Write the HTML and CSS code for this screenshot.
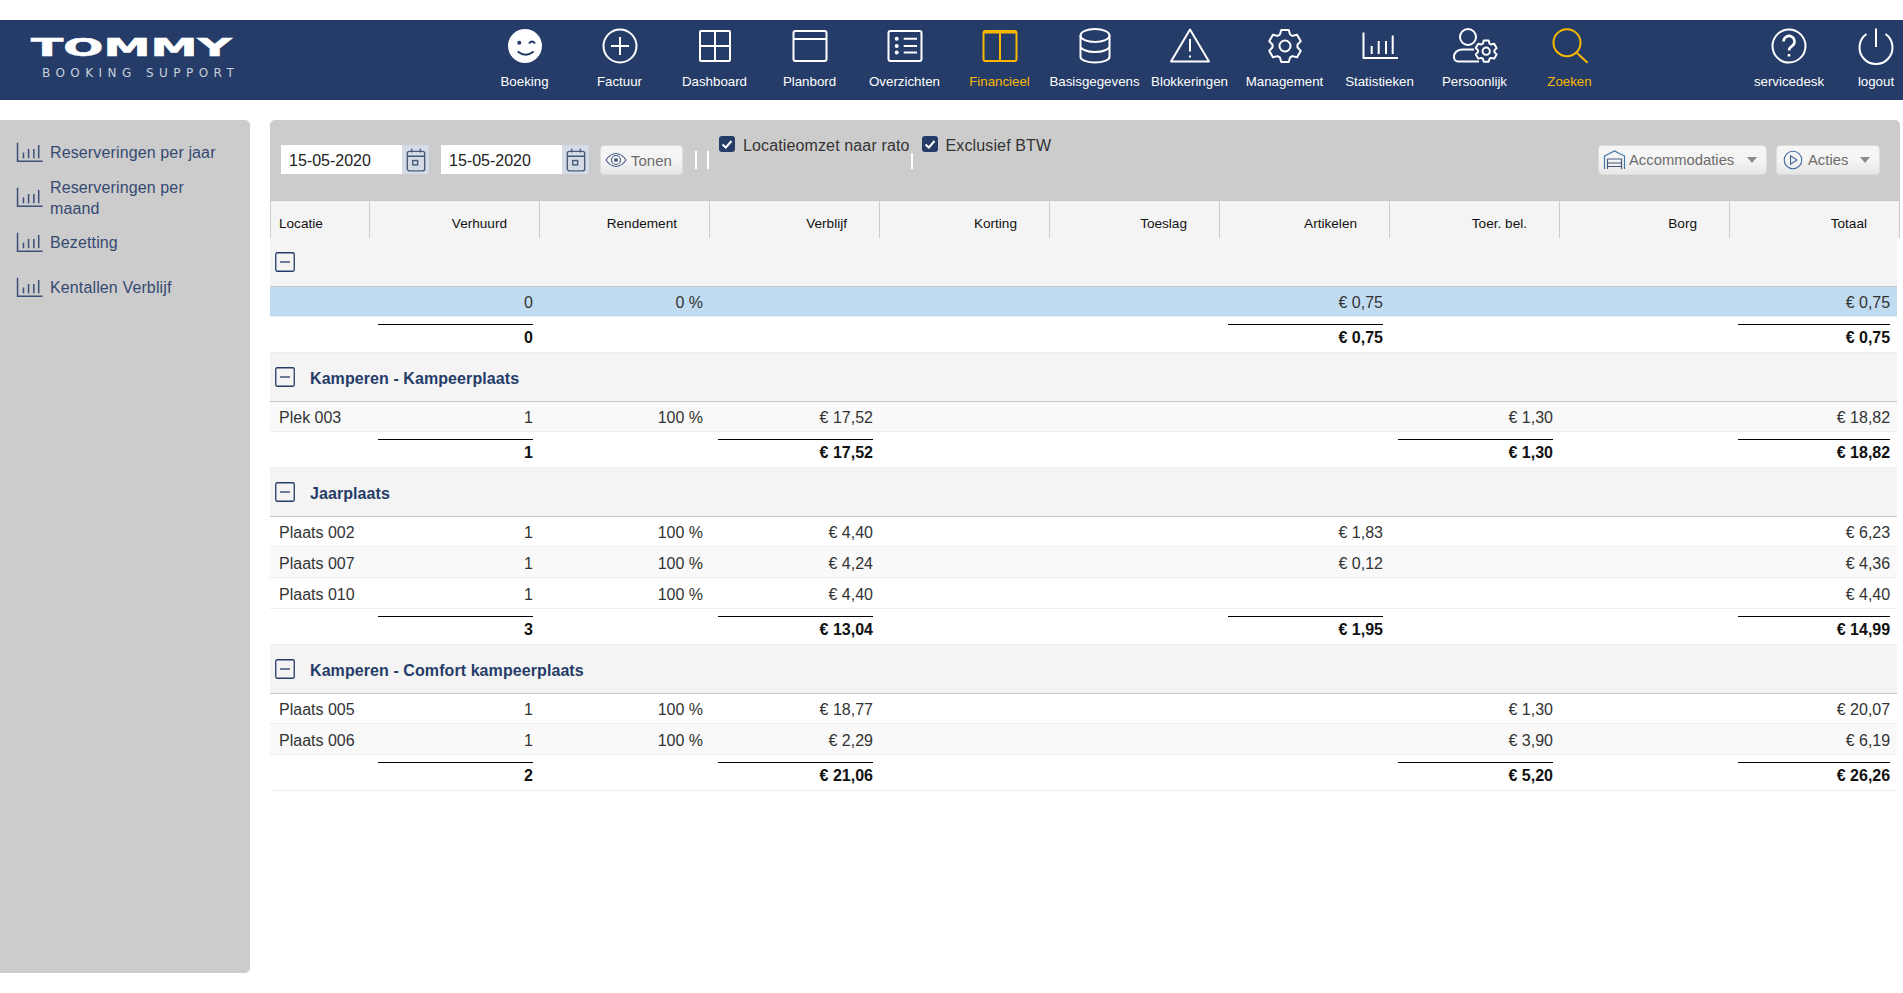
FILE: index.html
```html
<!DOCTYPE html>
<html lang="nl">
<head>
    <meta charset="UTF-8">
    <meta name="viewport" content="width=device-width, initial-scale=1.0">
    <title>Tommy Booking Support - Financieel</title>
    <link rel="stylesheet" href="styles.css">
</head>
<body>
    <svg class="icon-defs" width="0" height="0">
        <symbol id="gear" viewBox="0 0 40 40" overflow="visible">
            <path d="M14.92 8.58L16.29 3.92H23.71L25.08 8.58A12.5 12.5 0 0 1 27.35 9.89L32.07 8.75L35.78 15.18L32.43 18.69A12.5 12.5 0 0 1 32.43 21.31L35.78 24.82L32.07 31.25L27.35 30.11A12.5 12.5 0 0 1 25.08 31.42L23.71 36.08H16.29L14.92 31.42A12.5 12.5 0 0 1 12.65 30.11L7.93 31.25L4.22 24.82L7.57 21.31A12.5 12.5 0 0 1 7.57 18.69L4.22 15.18L7.93 8.75L12.65 9.89A12.5 12.5 0 0 1 14.92 8.58Z"/>
            <circle cx="20" cy="20" r="5.5"/>
        </symbol>
        <symbol id="stats" viewBox="0 0 40 40" overflow="visible">
            <path d="M3.5 6.5V32H38M11.7 20V28M18.7 15V28M26 15V28M32.7 9.5V28"/>
        </symbol>
        <symbol id="calendar" viewBox="0 0 20 24">
            <rect x="2" y="4" width="16" height="18" rx="2"/>
            <path d="M2 8.5H18M6 1.5V5M14 1.5V5"/>
            <rect x="7" y="12.5" width="4.5" height="4"/>
        </symbol>
        <symbol id="minus" viewBox="0 0 20 20">
            <rect x="0.75" y="0.75" width="18.5" height="18.5" rx="1.5"/>
            <path d="M5 10H15"/>
        </symbol>
    </svg>

    <header class="topbar">
        <div class="logo">
            <span class="logo-name">TOMMY</span>
            <span class="logo-sub">BOOKING SUPPORT</span>
        </div>
        <nav class="nav">
            <a class="nav-item">
                <svg class="nav-icon" viewBox="0 0 40 40"><circle class="fill-white" cx="20" cy="20" r="17"/><circle class="fill-navy" cx="14.3" cy="16.7" r="2"/><path class="stroke-navy" d="M24 17.5q3-4 6 0M12.7 25.5q8 6.500 16 0"/></svg>
                <span>Boeking</span>
            </a>
            <a class="nav-item">
                <svg class="nav-icon" viewBox="0 0 40 40"><circle cx="20" cy="20" r="16.500"/><path d="M20 11V29M11 20H29"/></svg>
                <span>Factuur</span>
            </a>
            <a class="nav-item">
                <svg class="nav-icon" viewBox="0 0 40 40"><rect x="5" y="5" width="30" height="30" rx="1"/><path d="M20 5V35M5 20H35"/></svg>
                <span>Dashboard</span>
            </a>
            <a class="nav-item">
                <svg class="nav-icon" viewBox="0 0 40 40"><rect x="3.500" y="5" width="33" height="30" rx="2"/><path d="M3.500 13H36.500"/></svg>
                <span>Planbord</span>
            </a>
            <a class="nav-item">
                <svg class="nav-icon" viewBox="0 0 40 40"><rect x="3.500" y="5" width="33" height="30" rx="2"/><path d="M18.700 12.700H32M18.700 20H32M18.700 26.500H32"/><circle class="fill-white" cx="11.700" cy="12.700" r="2"/><circle class="fill-white" cx="11.700" cy="20" r="2"/><circle class="fill-white" cx="11.700" cy="26.500" r="2"/></svg>
                <span>Overzichten</span>
            </a>
            <a class="nav-item nav-active">
                <svg class="nav-icon" viewBox="0 0 40 40"><rect x="3.500" y="5" width="33" height="30" rx="2"/><path d="M20 5V35M3.500 6.500H36.500"/></svg>
                <span>Financieel</span>
            </a>
            <a class="nav-item">
                <svg class="nav-icon" viewBox="0 0 40 40"><ellipse cx="20" cy="9.500" rx="14.500" ry="6.500"/><path d="M5.500 9.500V31A14.500 5.500 0 0 0 34.500 31V9.500M5.500 20A14.500 6 0 0 0 34.500 20"/></svg>
                <span>Basisgegevens</span>
            </a>
            <a class="nav-item">
                <svg class="nav-icon" viewBox="0 0 40 40"><path d="M20 3.500L39 35.500H1Z"/><path d="M20 13V25.500M20 29.500V31.500"/></svg>
                <span>Blokkeringen</span>
            </a>
            <a class="nav-item">
                <svg class="nav-icon" viewBox="0 0 40 40"><use href="#gear" width="40" height="40"/></svg>
                <span>Management</span>
            </a>
            <a class="nav-item">
                <svg class="nav-icon" viewBox="0 0 40 40"><use href="#stats" width="40" height="40"/></svg>
                <span>Statistieken</span>
            </a>
            <a class="nav-item">
                <svg class="nav-icon" viewBox="0 0 40 40"><circle cx="13" cy="11" r="8"/><path d="M19 23.500H7C2 23.500-1 27-1 31C-1 34 1 35.500 3 35.500H24"/><use class="gear-small" href="#gear" x="18" y="12" width="26.400" height="26.400"/></svg>
                <span>Persoonlijk</span>
            </a>
            <a class="nav-item nav-active">
                <svg class="nav-icon" viewBox="0 0 40 40"><circle cx="17" cy="16.700" r="13.500"/><path d="M27 27L37.500 36.700"/></svg>
                <span>Zoeken</span>
            </a>
        </nav>
        <nav class="nav nav-right">
            <a class="nav-item nav-service">
                <svg class="nav-icon" viewBox="0 0 40 40"><circle cx="20" cy="20" r="16.500"/><path class="stroke-thick" d="M14.500 15.500a5.500 5.500 0 1 1 8.500 4.600c-2 1.300-3 2.200-3 4.400M20 28V30.500"/></svg>
                <span>servicedesk</span>
            </a>
            <a class="nav-item nav-logout">
                <svg class="nav-icon" viewBox="0 0 40 40"><path d="M10.500 8A16.500 16.500 0 1 0 29.500 8M20 2.500V21"/></svg>
                <span>logout</span>
            </a>
        </nav>
    </header>

    <div class="page">
        <aside class="sidebar">
            <a class="side-item"><svg class="side-icon" viewBox="0 0 40 40"><use href="#stats" width="40" height="40"/></svg><span>Reserveringen per jaar</span></a>
            <a class="side-item"><svg class="side-icon" viewBox="0 0 40 40"><use href="#stats" width="40" height="40"/></svg><span>Reserveringen per maand</span></a>
            <a class="side-item"><svg class="side-icon" viewBox="0 0 40 40"><use href="#stats" width="40" height="40"/></svg><span>Bezetting</span></a>
            <a class="side-item"><svg class="side-icon" viewBox="0 0 40 40"><use href="#stats" width="40" height="40"/></svg><span>Kentallen Verblijf</span></a>
        </aside>

        <main class="content">
            <div class="toolbar">
                <div class="date-field">
                    <span class="date-value">15-05-2020</span>
                    <span class="date-addon"><svg class="cal-icon"><use href="#calendar"/></svg></span>
                </div>
                <div class="date-field date-second">
                    <span class="date-value">15-05-2020</span>
                    <span class="date-addon"><svg class="cal-icon"><use href="#calendar"/></svg></span>
                </div>
                <a class="btn btn-show">
                    <svg class="btn-icon-eye" viewBox="0 0 22 16"><path d="M1 8C4 3.500 7.500 1.500 11 1.500S18 3.500 21 8C18 12.500 14.500 14.500 11 14.500S4 12.500 1 8Z"/><circle cx="11" cy="8" r="4.500"/><circle class="fill-dark" cx="11" cy="8" r="2"/></svg>
                    Tonen
                </a>
                <span class="sep sep-a"></span>
                <span class="sep sep-b"></span>
                <label class="check check-first"><span class="check-box"><svg viewBox="0 0 16 16"><path d="M3.500 8.500L6.800 11.500L12.500 5"/></svg></span>Locatieomzet naar rato</label>
                <span class="sep sep-c"></span>
                <label class="check check-second"><span class="check-box"><svg viewBox="0 0 16 16"><path d="M3.500 8.500L6.800 11.500L12.500 5"/></svg></span>Exclusief BTW</label>

                <div class="toolbar-right">
                    <a class="btn btn-accom">
                        <svg class="btn-icon-garage" viewBox="0 0 22 20"><path class="line-blue" d="M1 19V6L11 1L21 6V19"/><path class="line-dark" d="M4 9H18V19M4 9V19M4 13H18M4 16.500H18"/></svg>
                        <span class="btn-label">Accommodaties</span>
                        <i class="caret"></i>
                    </a>
                    <a class="btn btn-actions">
                        <svg class="btn-icon-play" viewBox="0 0 20 20"><circle cx="10" cy="10" r="8.800"/><path d="M7.500 5.800L14 10L7.500 14.200Z"/></svg>
                        <span class="btn-label">Acties</span>
                        <i class="caret"></i>
                    </a>
                </div>
            </div>

            <table class="grid grid-head">
                <colgroup><col class="col-first"><col class="col-num" span="9"></colgroup>
                <tr>
                    <th class="th-first">Locatie</th>
                    <th>Verhuurd</th>
                    <th>Rendement</th>
                    <th>Verblijf</th>
                    <th>Korting</th>
                    <th>Toeslag</th>
                    <th>Artikelen</th>
                    <th>Toer. bel.</th>
                    <th>Borg</th>
                    <th>Totaal</th>
                </tr>
            </table>

            <table class="grid grid-body">
                <colgroup><col class="col-first"><col class="col-num" span="8"><col class="col-last"></colgroup>

                <tr class="group"><td colspan="10"><svg class="minus"><use href="#minus"/></svg></td></tr>
                <tr class="row row-selected"><td></td><td>0</td><td>0 %</td><td></td><td></td><td></td><td>€ 0,75</td><td></td><td></td><td>€ 0,75</td></tr>
                <tr class="total"><td></td><td><div>0</div></td><td></td><td></td><td></td><td></td><td><div>€ 0,75</div></td><td></td><td></td><td><div>€ 0,75</div></td></tr>

                <tr class="group"><td colspan="10"><svg class="minus"><use href="#minus"/></svg><span class="group-title">Kamperen - Kampeerplaats</span></td></tr>
                <tr class="row row-alt"><td>Plek 003</td><td>1</td><td>100 %</td><td>€ 17,52</td><td></td><td></td><td></td><td>€ 1,30</td><td></td><td>€ 18,82</td></tr>
                <tr class="total"><td></td><td><div>1</div></td><td></td><td><div>€ 17,52</div></td><td></td><td></td><td></td><td><div>€ 1,30</div></td><td></td><td><div>€ 18,82</div></td></tr>

                <tr class="group"><td colspan="10"><svg class="minus"><use href="#minus"/></svg><span class="group-title">Jaarplaats</span></td></tr>
                <tr class="row"><td>Plaats 002</td><td>1</td><td>100 %</td><td>€ 4,40</td><td></td><td></td><td>€ 1,83</td><td></td><td></td><td>€ 6,23</td></tr>
                <tr class="row row-alt"><td>Plaats 007</td><td>1</td><td>100 %</td><td>€ 4,24</td><td></td><td></td><td>€ 0,12</td><td></td><td></td><td>€ 4,36</td></tr>
                <tr class="row"><td>Plaats 010</td><td>1</td><td>100 %</td><td>€ 4,40</td><td></td><td></td><td></td><td></td><td></td><td>€ 4,40</td></tr>
                <tr class="total"><td></td><td><div>3</div></td><td></td><td><div>€ 13,04</div></td><td></td><td></td><td><div>€ 1,95</div></td><td></td><td></td><td><div>€ 14,99</div></td></tr>

                <tr class="group"><td colspan="10"><svg class="minus"><use href="#minus"/></svg><span class="group-title">Kamperen - Comfort kampeerplaats</span></td></tr>
                <tr class="row"><td>Plaats 005</td><td>1</td><td>100 %</td><td>€ 18,77</td><td></td><td></td><td></td><td>€ 1,30</td><td></td><td>€ 20,07</td></tr>
                <tr class="row row-alt"><td>Plaats 006</td><td>1</td><td>100 %</td><td>€ 2,29</td><td></td><td></td><td></td><td>€ 3,90</td><td></td><td>€ 6,19</td></tr>
                <tr class="total"><td></td><td><div>2</div></td><td></td><td><div>€ 21,06</div></td><td></td><td></td><td></td><td><div>€ 5,20</div></td><td></td><td><div>€ 26,26</div></td></tr>
            </table>
        </main>
    </div>
</body>
</html>
```

FILE: styles.css
```css
* {
    box-sizing: border-box;
}
body {
    margin: 0;
    padding-top: 20px;
    background: #fff;
    font-family: "Liberation Sans", Arial, sans-serif;
    font-size: 16px;
    color: #333;
}
.icon-defs {
    position: absolute;
}

/* Topbar */
.topbar {
    display: flex;
    height: 80px;
    background: #253c68;
    color: #fff;
}
.logo {
    width: 477px;
    flex: none;
    padding: 17px 0 0 31px;
}
.logo-name {
    display: block;
    height: 22px;
    font-family: "DejaVu Sans", sans-serif;
    font-weight: bold;
    font-size: 25px;
    line-height: 22px;
    transform: scaleX(1.89);
    transform-origin: left center;
    -webkit-text-stroke: 0.6px #fff;
}
.logo-sub {
    display: block;
    margin: 8px 0 0 11px;
    font-family: "DejaVu Sans", sans-serif;
    font-size: 12px;
    line-height: 12px;
    letter-spacing: 5.45px;
    color: #c9d0dc;
    white-space: nowrap;
}
.nav {
    display: flex;
}
.nav-right {
    margin-left: auto;
}
.nav-item {
    width: 95px;
    padding-top: 6px;
    text-align: center;
    font-size: 13.3px;
    line-height: 16px;
    color: #fff;
    white-space: nowrap;
}
.nav-service {
    width: 120px;
}
.nav-logout {
    width: 54px;
}
.nav-active {
    color: #f9b800;
}
.nav-icon {
    display: block;
    width: 40px;
    height: 40px;
    margin: 0 auto 8px;
    fill: none;
    stroke: currentColor;
    stroke-width: 2;
    stroke-linejoin: round;
    overflow: visible;
}
.fill-white {
    fill: #fff;
    stroke: none;
}
.fill-navy {
    fill: #253c68;
    stroke: none;
}
.stroke-navy {
    stroke: #253c68;
}
.stroke-thick {
    stroke-width: 2.6;
}
.gear-small {
    stroke-width: 3;
}

/* Sidebar */
.page {
    display: flex;
    gap: 20px;
    padding-top: 20px;
}
.sidebar {
    width: 250px;
    height: 853px;
    flex: none;
    padding: 10px 30px 0 15px;
    background: #ccc;
    border-radius: 0 5px 5px 0;
}
.side-item {
    display: flex;
    align-items: center;
    gap: 6px;
    height: 45px;
    line-height: 21px;
    letter-spacing: 0.13px;
    color: #344a72;
}
.side-icon {
    width: 29px;
    height: 29px;
    flex: none;
    fill: none;
    stroke: #3c5079;
    stroke-width: 2.1;
    overflow: visible;
}

/* Toolbar */
.content {
    width: 1630px;
}
.toolbar {
    display: flex;
    align-items: flex-start;
    height: 80px;
    padding: 16px 20px 0 11px;
    background: #ccc;
    border-radius: 5px 5px 0 0;
}
.date-field {
    display: flex;
    width: 149px;
    height: 29px;
    margin-top: 9px;
    background: #fff;
}
.date-second {
    margin-left: 11px;
}
.date-value {
    flex: 1;
    padding-left: 8px;
    line-height: 31px;
    color: #222;
}
.date-addon {
    display: flex;
    width: 28px;
    align-items: center;
    justify-content: center;
    background: #d5dce6;
    border-right: 1px solid #c0c6cf;
}
.cal-icon {
    width: 22px;
    height: 26px;
    fill: none;
    stroke: #46597c;
    stroke-width: 1.3;
}
.btn {
    display: flex;
    align-items: center;
    height: 30px;
    margin-top: 9px;
    border: 1px solid #ddd;
    border-radius: 4px;
    background: linear-gradient(#f5f5f5 50%, #e6e6e6);
    color: #6b6b6b;
    font-size: 14.8px;
}
.btn-show {
    width: 83px;
    margin-left: 10px;
    padding-left: 4px;
    gap: 4px;
    font-size: 15px;
}
.btn-icon-eye {
    width: 22px;
    height: 16px;
    fill: none;
    stroke: #4d6285;
    stroke-width: 1.2;
}
.fill-dark {
    fill: #4d6285;
    stroke: none;
}
.sep {
    width: 2px;
    height: 18px;
    margin-top: 15px;
    background: #fff;
    flex: none;
}
.sep-a {
    margin-left: 12px;
}
.sep-b {
    margin-left: 10px;
}
.sep-c {
    margin-left: 1px;
    margin-top: 17px;
    height: 16px;
}
.check {
    display: flex;
    gap: 8px;
    line-height: 20px;
    letter-spacing: 0.13px;
    color: #333;
    white-space: nowrap;
}
.check-first {
    margin-left: 10px;
}
.check-second {
    margin-left: 9px;
}
.check-box {
    display: block;
    width: 16px;
    height: 16px;
    background: #253c68;
    border-radius: 3px;
}
.check-box svg {
    display: block;
    fill: none;
    stroke: #fff;
    stroke-width: 2;
}
.toolbar-right {
    display: flex;
    gap: 9px;
    margin-left: auto;
}
.btn-accom {
    width: 169px;
    padding-left: 4px;
}
.btn-actions {
    width: 104px;
    padding-left: 6px;
}
.btn-label {
    flex: 1;
}
.btn-icon-garage {
    width: 23px;
    height: 20px;
    margin-right: 3px;
    fill: none;
    stroke-width: 1.2;
}
.line-blue {
    stroke: #3f78ab;
}
.line-dark {
    stroke: #46597c;
}
.btn-icon-play {
    width: 20px;
    height: 20px;
    margin-right: 5px;
    fill: none;
    stroke: #3f6a9b;
    stroke-width: 1.1;
}
.caret {
    width: 0;
    height: 0;
    margin-right: 9px;
    border-left: 5px solid transparent;
    border-right: 5px solid transparent;
    border-top: 6px solid #8c8c8c;
}

/* Tables */
.grid {
    table-layout: fixed;
    border-spacing: 0;
    border-collapse: separate;
}
.grid-head {
    width: 1630px;
}
.grid-body {
    width: 1627px;
}
.col-first {
    width: 100px;
}
.col-num {
    width: 170px;
}
.col-last {
    width: 167px;
}
.grid th {
    height: 38px;
    padding: 7px 32px 0 0;
    background: #f4f4f4;
    border-top: 1px solid #c6c6c6;
    border-right: 1px solid #ccc;
    font-weight: normal;
    font-size: 13.6px;
    text-align: right;
    color: #111;
}
.grid th.th-first {
    padding-left: 8px;
    padding-right: 0;
    border-left: 1px solid #ccc;
    text-align: left;
}
.grid td {
    padding: 0 7px 0 0;
    text-align: right;
}
.group td {
    height: 49px;
    padding-left: 5px;
    padding-bottom: 1px;
    background: #f4f4f4;
    border-bottom: 1px solid #c8c8c8;
    text-align: left;
    vertical-align: middle;
}
.minus {
    display: inline-block;
    width: 20px;
    height: 20px;
    vertical-align: middle;
    fill: none;
    stroke: #253c68;
    stroke-width: 1.3;
}
.group-title {
    display: inline-block;
    margin-left: 15px;
    padding-top: 5px;
    font-weight: bold;
    letter-spacing: 0.08px;
    color: #253c68;
    vertical-align: middle;
}
.row td {
    height: 31px;
    padding-top: 3px;
    border-bottom: 1px solid #eee;
    line-height: 20px;
}
.group + .row td {
    height: 30px;
    padding-top: 2px;
}
.row td:first-child {
    padding-left: 9px;
    text-align: left;
}
.row-alt td {
    background: #f9f9f9;
}
.row-selected td {
    background: #c1dcf1;
    border-bottom-color: #e3f0f9;
}
.total td {
    height: 36px;
    padding: 7px 7px 0 8px;
    border-bottom: 1px solid #eee;
    vertical-align: top;
    font-weight: bold;
    color: #111;
}
.total div {
    height: 28px;
    border-top: 1px solid #000;
    line-height: 26px;
}
```
